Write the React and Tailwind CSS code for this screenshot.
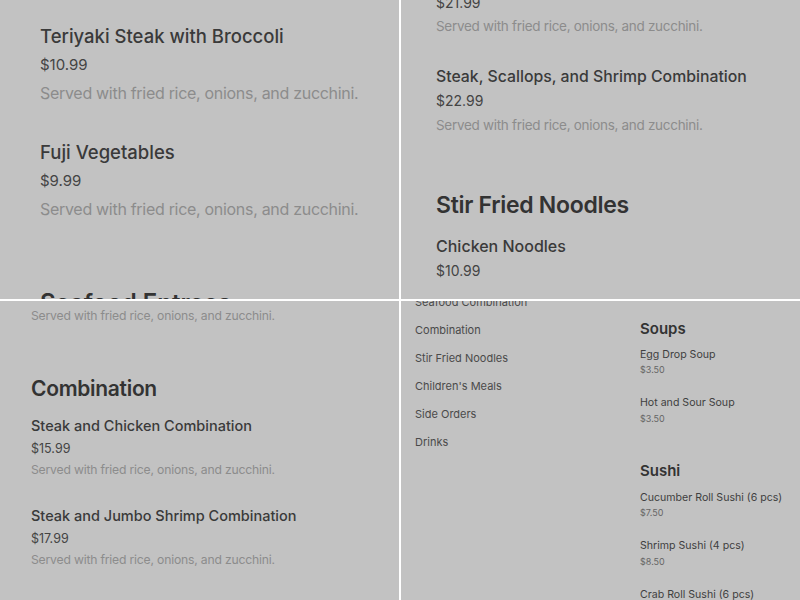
import React from 'react';

const desc = 'Served with fried rice, onions, and zucchini.';

const Panel = ({ children, className = '' }) => (
  <div className={`relative overflow-hidden bg-[#c2c2c2] ${className}`}>{children}</div>
);

export default function App() {
  return (
    <div className="grid h-[600px] w-[800px] grid-cols-[399px_399px] grid-rows-[299px_299px] gap-[2px] bg-white font-[Inter,sans-serif]">
      {/* top left: entrees, large */}
      <Panel>
        <div className="flex flex-col pl-[40px] pt-[24px]">
          <h3 className="h-[24px] text-[18.5px] leading-[24px] font-medium text-[#3a3a3a]">Teriyaki Steak with Broccoli</h3>
          <p className="mt-[7px] h-[20px] text-[15px] leading-[20px] text-[#444]">$10.99</p>
          <p className="mt-[7px] h-[22px] text-[16px] leading-[22px] tracking-[-0.3px] text-[#8c8c8c]">{desc}</p>

          <h3 className="mt-[36px] h-[24px] text-[18.5px] leading-[24px] font-medium text-[#3a3a3a]">Fuji Vegetables</h3>
          <p className="mt-[7px] h-[20px] text-[15px] leading-[20px] text-[#444]">$9.99</p>
          <p className="mt-[7px] h-[22px] text-[16px] leading-[22px] tracking-[-0.3px] text-[#8c8c8c]">{desc}</p>

          <h2 className="mt-[67px] h-[32px] text-[24px] leading-[32px] font-semibold text-[#333]">Seafood Entrees</h2>
        </div>
      </Panel>

      {/* top right: combinations / noodles */}
      <Panel>
        <div className="-mt-[7px] flex flex-col pl-[35px]">
          <p className="h-[20px] text-[14px] leading-[20px] text-[#444]">$21.99</p>
          <p className="mt-[3px] h-[20px] text-[13.5px] leading-[20px] tracking-[-0.3px] text-[#8c8c8c]">{desc}</p>

          <h3 className="mt-[29px] h-[24px] text-[15.8px] leading-[24px] font-medium text-[#3a3a3a]">Steak, Scallops, and Shrimp Combination</h3>
          <p className="mt-[2px] h-[20px] text-[14px] leading-[20px] text-[#444]">$22.99</p>
          <p className="mt-[4px] h-[20px] text-[13.5px] leading-[20px] tracking-[-0.3px] text-[#8c8c8c]">{desc}</p>

          <h2 className="mt-[54px] h-[32px] text-[23px] leading-[32px] font-semibold tracking-[-0.3px] text-[#333]">Stir Fried Noodles</h2>
          <h3 className="mt-[13px] h-[24px] text-[16px] leading-[24px] font-medium text-[#3a3a3a]">Chicken Noodles</h3>
          <p className="mt-[3px] h-[20px] text-[14px] leading-[20px] text-[#444]">$10.99</p>
        </div>
      </Panel>

      {/* bottom left: combination */}
      <Panel>
        <div className="flex flex-col pl-[31px] pt-[5px]">
          <p className="h-[20px] text-[12.2px] leading-[20px] tracking-[-0.2px] text-[#8c8c8c]">{desc}</p>

          <h2 className="mt-[48px] h-[30px] text-[21px] leading-[30px] font-semibold tracking-[-0.3px] text-[#333]">Combination</h2>

          <h3 className="mt-[11px] h-[22px] text-[14.5px] leading-[22px] font-medium text-[#3a3a3a]">Steak and Chicken Combination</h3>
          <p className="mt-[3px] h-[18px] text-[12.5px] leading-[18px] text-[#444]">$15.99</p>
          <p className="mt-[3px] h-[18px] text-[12.2px] leading-[18px] tracking-[-0.2px] text-[#8c8c8c]">{desc}</p>

          <h3 className="mt-[26px] h-[22px] text-[14.5px] leading-[22px] font-medium text-[#3a3a3a]">Steak and Jumbo Shrimp Combination</h3>
          <p className="mt-[3px] h-[18px] text-[12.5px] leading-[18px] text-[#444]">$17.99</p>
          <p className="mt-[3px] h-[18px] text-[12.2px] leading-[18px] tracking-[-0.2px] text-[#8c8c8c]">{desc}</p>

          <h3 className="mt-[26px] h-[22px] text-[14.5px] leading-[22px] font-medium text-[#3a3a3a]">Steak, Chicken, and Shrimp Combination</h3>
        </div>
      </Panel>

      {/* bottom right: category nav + soups / sushi */}
      <Panel>
        <div className="flex">
          <nav className="-mt-[7px] flex w-[240px] shrink-0 flex-col gap-[12px] pl-[14px] text-[11px] leading-[16px] text-[#4a4a4a]">
            <span>Seafood Combination</span>
            <span>Combination</span>
            <span>Stir Fried Noodles</span>
            <span>Children's Meals</span>
            <span>Side Orders</span>
            <span>Drinks</span>
          </nav>

          <div className="-ml-px flex flex-col pt-[18px]">
            <h2 className="h-[20px] text-[15px] leading-[20px] font-semibold text-[#333]">Soups</h2>
            <h3 className="mt-[8px] h-[16px] text-[10.6px] leading-[16px] text-[#3f3f3f]">Egg Drop Soup</h3>
            <p className="mt-[1px] h-[12px] text-[9px] leading-[12px] text-[#666]">$3.50</p>
            <h3 className="mt-[19px] h-[16px] text-[10.6px] leading-[16px] text-[#3f3f3f]">Hot and Sour Soup</h3>
            <p className="mt-[2px] h-[12px] text-[9px] leading-[12px] text-[#666]">$3.50</p>

            <h2 className="mt-[36px] h-[20px] text-[15px] leading-[20px] font-semibold text-[#333]">Sushi</h2>
            <h3 className="mt-[9px] h-[16px] text-[10.6px] leading-[16px] text-[#3f3f3f]">Cucumber Roll Sushi (6 pcs)</h3>
            <p className="mt-[1px] h-[12px] text-[9px] leading-[12px] text-[#666]">$7.50</p>
            <h3 className="mt-[19px] h-[16px] text-[10.6px] leading-[16px] text-[#3f3f3f]">Shrimp Sushi (4 pcs)</h3>
            <p className="mt-[2px] h-[12px] text-[9px] leading-[12px] text-[#666]">$8.50</p>
            <h3 className="mt-[19px] h-[16px] text-[10.6px] leading-[16px] text-[#3f3f3f]">Crab Roll Sushi (6 pcs)</h3>
          </div>
        </div>
      </Panel>
    </div>
  );
}
